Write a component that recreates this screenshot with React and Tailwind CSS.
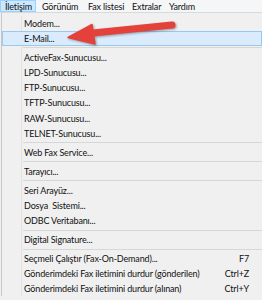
import React from 'react';

const menuBar = [
  { label: 'İletişim', w: 'w-[36px]', pl: 'pl-[4px]', active: true },
  { label: 'Görünüm', w: 'w-[47px]', pl: 'pl-[6px]' },
  { label: 'Fax listesi', w: 'w-[44px]', pl: 'pl-[5px]' },
  { label: 'Extralar', w: 'w-[36px]', pl: 'pl-[5px]' },
  { label: 'Yardım', w: 'w-[40px]', pl: 'pl-[6px]' },
];

const items = [
  { label: 'Modem...' },
  { label: 'E-Mail...', hover: true },
  { sep: true },
  { label: 'ActiveFax-Sunucusu...' },
  { label: 'LPD-Sunucusu...' },
  { label: 'FTP-Sunucusu...' },
  { label: 'TFTP-Sunucusu...' },
  { label: 'RAW-Sunucusu...' },
  { label: 'TELNET-Sunucusu...' },
  { sep: true },
  { label: 'Web Fax Service...' },
  { sep: true },
  { label: 'Tarayıcı...' },
  { sep: true },
  { label: 'Seri Arayüz...' },
  { label: 'Dosya  Sistemi...' },
  { label: 'ODBC Veritabanı...' },
  { sep: true },
  { label: 'Digital Signature...' },
  { sep: true },
  { label: 'Seçmeli Çalıştır (Fax-On-Demand)...', key: 'F7' },
  { label: 'Gönderimdeki Fax iletimini durdur (gönderilen)', key: 'Ctrl+Z' },
  { label: 'Gönderimdeki Fax iletimini durdur (alınan)', key: 'Ctrl+Y' },
];

function Row({ item }) {
  if (item.sep) {
    return (
      <div className="flex h-[3.8px]">
        <div className="w-[20px] shrink-0 border-r border-[#e2e2e2]" />
        <div className="flex-1 flex items-center pl-[1px]">
          <div className="h-px w-full bg-[#d7d7d7]" />
        </div>
      </div>
    );
  }
  if (item.hover) {
    return (
      <div className="flex h-[15.2px] items-center mr-[2px] border border-[#99c9ee] bg-[#d9ebfd]">
        <div className="w-[19px] shrink-0" />
        <span className="pl-[2px] whitespace-pre">{item.label}</span>
      </div>
    );
  }
  return (
    <div className="flex h-[15.2px]">
      <div className="w-[20px] shrink-0 border-r border-[#e2e2e2]" />
      <div className="flex-1 flex items-center justify-between pl-[2px] pr-[15px]">
        <span className="whitespace-pre">{item.label}</span>
        {item.key && <span>{item.key}</span>}
      </div>
    </div>
  );
}

export default function App() {
  return (
    <div className="relative w-[262px] h-[300px] overflow-hidden bg-[#f0f0f0] text-[#111] text-[9px] leading-none tracking-[-0.15px] font-['Lato','Liberation_Sans',sans-serif]">
      <div className="flex h-[13px] bg-[#f5f6f7] border-b border-[#d9d9d9]">
        {menuBar.map((m) => (
          <div
            key={m.label}
            className={`${m.w} ${m.pl} shrink-0 flex items-center h-[12px] whitespace-nowrap ${
              m.active ? 'bg-[#cce8ff] border border-[#99d1ff] pl-[3px]' : ''
            }`}
          >
            {m.label}
          </div>
        ))}
      </div>
      <div className="ml-[1px] w-[263px] border-l border-[#c8c8c8] pt-[2.5px]">
        {items.map((it, i) => (
          <Row key={i} item={it} />
        ))}
      </div>
      <svg
        className="absolute left-0 top-0 drop-shadow-[1px_1px_1px_rgba(0,0,0,0.35)] pointer-events-none"
        width="262"
        height="60"
        viewBox="0 0 262 60"
      >
        <line x1="88" y1="33.5" x2="172" y2="25" stroke="#e5413b" strokeWidth="7" strokeLinecap="round" />
        <polygon points="68,37.5 92,24.5 95,44" fill="#e5413b" strokeLinejoin="round" stroke="#e5413b" strokeWidth="1.5" />
      </svg>
    </div>
  );
}
